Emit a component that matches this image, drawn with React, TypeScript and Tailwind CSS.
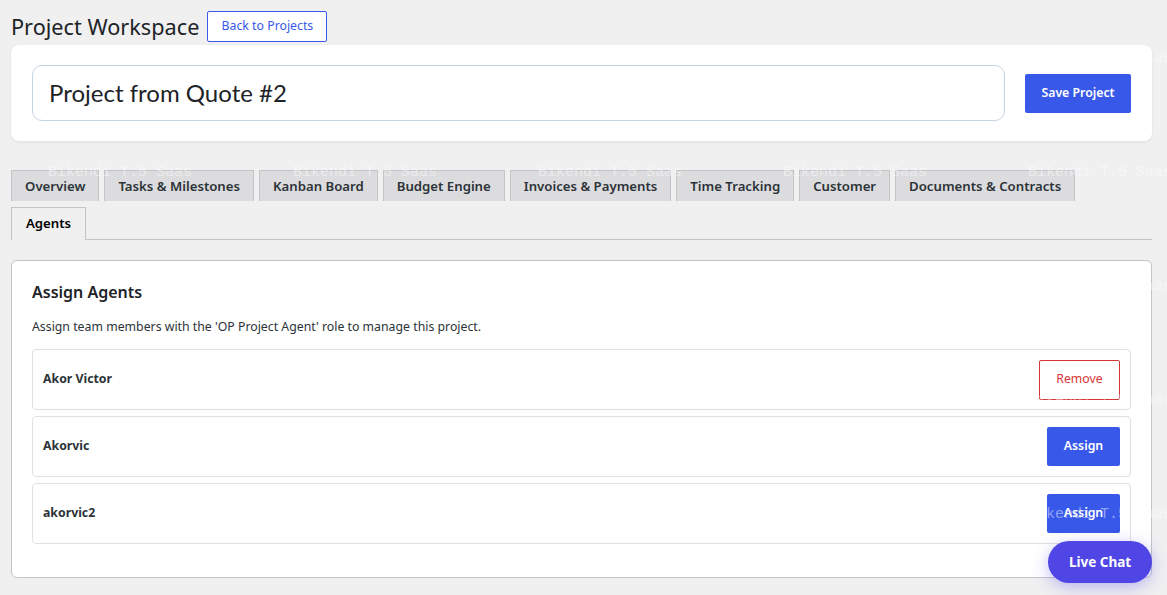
import React from "react";

const tabs = [
  "Overview",
  "Tasks & Milestones",
  "Kanban Board",
  "Budget Engine",
  "Invoices & Payments",
  "Time Tracking",
  "Customer",
  "Documents & Contracts",
  "Agents",
];

const agents = [
  { name: "Akor Victor", assigned: true },
  { name: "Akorvic", assigned: false },
  { name: "akorvic2", assigned: false },
];

const watermarks = [
  { x: 1028, y: 58 },
  { x: 48, y: 172 },
  { x: 293, y: 172 },
  { x: 538, y: 172 },
  { x: 783, y: 172 },
  { x: 1028, y: 172 },
  { x: 1028, y: 286 },
  { x: 1028, y: 400 },
  { x: 1028, y: 514 },
];

export default function App() {
  return (
    <div className="relative min-h-[595px] overflow-hidden bg-[#f0f0f1] font-['Noto_Sans',sans-serif] text-[#1d2327]">
      <div className="pl-[11px] pr-[15px] pt-[11px] pb-[12px]">
        <div className="flex items-center gap-[8px]">
          <h1 className="text-[21.7px] font-normal leading-[30px] text-[#1d2327]">Project Workspace</h1>
          <button className="h-[31px] w-[120px] rounded-[2px] border border-[#3858e9] bg-white text-[12.3px] text-[#3858e9]">
            Back to Projects
          </button>
        </div>

        <div className="mt-[3px] flex items-center gap-[20px] rounded-[8px] bg-white px-[21px] py-[20px] shadow-[0_1px_3px_rgba(0,0,0,0.08)]">
          <div className="flex h-[56px] flex-1 items-center rounded-[10px] border border-[#c8d3e1] pl-[16px] font-['Lato',sans-serif] text-[24px] text-[#1d2327]">
            Project from Quote #2
          </div>
          <button className="h-[39px] w-[106px] rounded-[2px] bg-[#3858e9] text-[12.3px] font-semibold text-white">
            Save Project
          </button>
        </div>

        <div className="mt-[29px] flex flex-wrap gap-x-[5px] gap-y-[6px] border-b border-[#c3c4c7]">
          {tabs.map((t) => {
            const active = t === "Agents";
            return (
              <div
                key={t}
                className={
                  active
                    ? "mb-[-1px] h-[33px] border border-b-0 border-[#c3c4c7] bg-[#f0f0f1] px-[14px] text-[13.2px] font-semibold leading-[31px] text-[#000]"
                    : "h-[31px] border border-b-0 border-[#c3c4c7] bg-[#dcdcde] px-[13px] text-[13.2px] font-semibold leading-[30px] text-[#2c3338]"
                }
              >
                {t}
              </div>
            );
          })}
        </div>

        <div className="mt-[20px] rounded-[6px] border border-[#c3c4c7] bg-white px-[20px] pt-[18px] pb-[33px]">
          <h2 className="text-[16px] font-semibold leading-[26px] text-[#1d2327]">Assign Agents</h2>
          <p className="mt-[12px] text-[12.3px] leading-[20px] text-[#2c3338]">
            Assign team members with the 'OP Project Agent' role to manage this project.
          </p>
          <div className="mt-[12px] flex flex-col gap-[6px]">
            {agents.map((a) => (
              <div
                key={a.name}
                className="flex h-[61px] items-center justify-between rounded-[4px] border border-[#e0e0e0] pl-[10px] pr-[10px]"
              >
                <span className="text-[12.3px] font-bold text-[#2c3338]">{a.name}</span>
                {a.assigned ? (
                  <button className="h-[40px] w-[81px] rounded-[2px] border border-[#d63638] bg-white text-[12.3px] text-[#d63638]">
                    Remove
                  </button>
                ) : (
                  <button className="h-[39px] w-[73px] rounded-[2px] bg-[#3858e9] text-[12.3px] font-semibold text-white">
                    Assign
                  </button>
                )}
              </div>
            ))}
          </div>
        </div>
      </div>

      <div className="pointer-events-none absolute inset-0">
        {watermarks.map(({ x, y }) => (
          <span
            key={`${x}-${y}`}
            className="absolute whitespace-nowrap font-['Liberation_Mono',monospace] text-[15px] text-white/45"
            style={{ left: x, top: y - 10 }}
          >
            Bikendi T.5 Saas
          </span>
        ))}
      </div>

      <button className="absolute bottom-[12px] right-[15px] h-[42px] w-[104px] rounded-full bg-[#4f46e5] text-[13.5px] font-bold text-white shadow-[0_4px_16px_rgba(79,70,229,0.35)]">
        Live Chat
      </button>
    </div>
  );
}
